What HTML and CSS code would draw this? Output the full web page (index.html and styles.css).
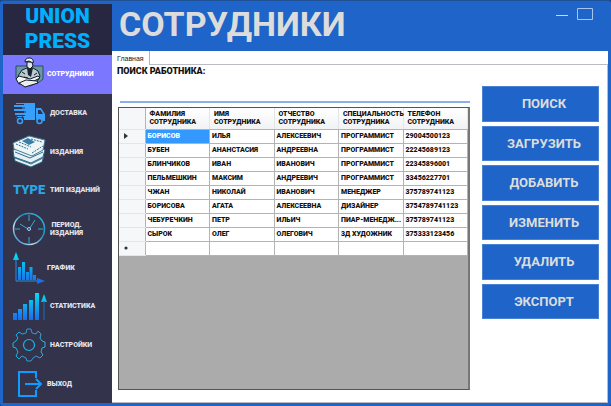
FILE: index.html
```html
<!DOCTYPE html>
<html lang="ru">
<head>
<meta charset="utf-8">
<title>Union Press — Сотрудники</title>
<link rel="stylesheet" href="styles.css">
</head>
<body>
<div class="window">
  <aside class="sidebar">
    <div class="logo">UNION<br>PRESS</div>
    <nav class="menu">
      <a class="item item-active" href="#staff">
        <svg class="icon" viewBox="0 0 32 32">
          <path d="M3 8H30V21C27 25 22 25 17 28C12 25 6 25 3 21Z" fill="#6b98a6" stroke="#2c4a62"/>
          <path d="M9 12L14 10L20 10L25 13L27 18L24 24L12 26L7 22L5 18Z" fill="#bccbd0" stroke="#111a29"/>
          <path d="M14 10L15 17L18 19L20 10Z" fill="#1a2533"/>
          <path d="M9 14L12 16M24 15L21 17M11 19L15 20" stroke="#111a29"/>
          <path d="M14 4H19L20 8L17 11L14 9Z" fill="#dfe6e6" stroke="#111a29"/>
          <path d="M12 4C12 1 14 0 16 0C19 0 21 2 20 5L16 3Z" fill="#f0f3f3" stroke="#111a29"/>
          <path d="M3 21L6 18L17 21L25 18L27 20L17 25L6 26Z" fill="#f4f5f2" stroke="#111a29"/>
          <path d="M6 25L13 22L24 23L25 25L12 29Z" fill="#eceeec" stroke="#111a29"/>
        </svg>
        <span>СОТРУДНИКИ</span>
      </a>
      <a class="item item-wide" href="#delivery">
        <svg class="icon" viewBox="0 0 32 32">
          <g fill="#36a0fa">
            <path d="M3 6H22V23H11A4 4 0 0 0 3 22V20H9V18H2V16H11V14H1V12H9V10H1V8H3Z"/>
            <path d="M23 11H28L32 17V24H30A4 4 0 0 0 23 23Z"/>
          </g>
          <path d="M1 7.500H11M1 11H12M3 15H13M1 18.500H12" stroke="#33334b"/>
          <path d="M25 13H27.500L30 17H25Z" fill="#33334b"/>
          <g fill="#33334b" stroke="#36a0fa" stroke-width="1.500"><circle cx="7" cy="24" r="2.500"/><circle cx="26.500" cy="24" r="2.500"/></g>
        </svg>
        <span>ДОСТАВКА</span>
      </a>
      <a class="item item-wide" href="#editions">
        <svg class="icon" viewBox="0 0 32 32">
          <path d="M1 20L20 15L31 20L29 26L18 31L2 25Z" fill="#e6f1f5" stroke="#286484"/>
          <path d="M0 14L20 9L32 14L30 21L18 27L1 21Z" fill="#e6f1f5" stroke="#286484"/>
          <path d="M0 7L16 0L32 4L30 14L19 20L1 13Z" fill="#edf5f7" stroke="#477c98"/>
          <path d="M9 5L15 2L22 6L16 9Z" fill="#377fa6"/>
          <path d="M3 8L15 13M6 6L18 11M18 3L29 6M19 17L30 10" fill="none" stroke="#2e6d8f" stroke-dasharray="2 1"/>
          <path d="M2 16L17 22L30 16M2 22L18 28L30 22" fill="none" stroke="#2e6d8f"/>
        </svg>
        <span>ИЗДАНИЯ</span>
      </a>
      <a class="item item-wide" href="#types">
        <span class="type-mark">TYPE</span>
        <span>ТИП ИЗДАНИЙ</span>
      </a>
      <a class="item item-wide" href="#period">
        <svg class="icon" viewBox="0 0 32 32">
          <defs><linearGradient id="clock" x1="0" y1="1" x2="1" y2="0"><stop offset="0" stop-color="#1268bd"/><stop offset=".3" stop-color="#b5e0f0"/><stop offset=".6" stop-color="#258fbd"/><stop offset="1" stop-color="#2cc4ed"/></linearGradient></defs>
          <circle cx="16" cy="16" r="15.500" fill="none" stroke="url(#clock)" stroke-width="1.500"/>
          <path d="M16 2V8M16 24V30M2 16H7M25 16H30M7 11L15 16M17 15L22 7" fill="none" stroke="#35acd9"/>
          <circle cx="16" cy="16" r="1.500" fill="none" stroke="#a5dcef"/>
        </svg>
        <span class="center">ПЕРИОД.<br>ИЗДАНИЯ</span>
      </a>
      <a class="item" href="#chart">
        <svg class="icon" viewBox="0 0 32 32">
          <defs><linearGradient id="bars" x1="0" y1="0" x2="0" y2="32" gradientUnits="userSpaceOnUse"><stop offset="0" stop-color="#00eaf2"/><stop offset="1" stop-color="#1e63e9"/></linearGradient></defs>
          <path d="M3 5V29H27" fill="none" stroke="#288ee6"/>
          <path d="M3 0L6 8H0ZM32 29L24 26V32ZM5 15H8V28H5ZM9 10H12V28H9ZM13 20H16V28H13ZM16.500 15H19.500V28H16.500ZM20 23H23V28H20Z" fill="url(#bars)"/>
        </svg>
        <span>ГРАФИК</span>
      </a>
      <a class="item item-wide" href="#stats">
        <svg class="icon" viewBox="0 0 32 32">
          <path d="M0 23H4V30H0ZM5 19H9V30H5ZM10 14H14V30H10ZM16 10H20V30H16ZM22 3H26V30H22ZM31 4L34 12H28Z" fill="url(#bars)"/>
          <path d="M31 11V30" stroke="#1b70b9"/>
        </svg>
        <span>СТАТИСТИКА</span>
      </a>
      <a class="item item-wide" href="#settings">
        <svg class="icon" viewBox="0 0 32 32">
          <defs><linearGradient id="gear"><stop offset="0" stop-color="#18b9e8"/><stop offset=".6" stop-color="#2d95d6"/><stop offset="1" stop-color="#23b9e7"/></linearGradient></defs>
          <path d="M14 0H18L19 4L23 5L25 2L28 5L27 9L29 12L32 13V18L29 19L28 23L30 26L27 29L23 27L20 29L18 32H14L13 29L9 27L6 30L3 27L5 23L3 19L0 18V14L3 12L5 9L3 6L6 3L9 5L13 4Z" fill="none" stroke="url(#gear)" stroke-linejoin="round"/>
          <circle cx="16" cy="16" r="5.500" fill="none" stroke="#16b5e8" stroke-width="1.200"/>
        </svg>
        <span>НАСТРОЙКИ</span>
      </a>
      <a class="item" href="#exit">
        <svg class="icon" viewBox="0 0 32 32">
          <path d="M23 10V4H6V28H23V22M12 16H27M23 11L28 16L23 21" fill="none" stroke="#109bff" stroke-width="2"/>
        </svg>
        <span>ВЫХОД</span>
      </a>
    </nav>
  </aside>
  <main class="main">
    <header class="header">
      <h1 class="title">СОТРУДНИКИ</h1>
      <div class="controls">
        <button class="control" type="button" aria-label="Свернуть"><svg width="12" height="12" viewBox="0 0 12 12"><path d="M0 7.500H12" stroke="#c9d9ef"/></svg></button>
        <button class="control" type="button" aria-label="Развернуть"><svg width="16" height="12" viewBox="0 0 16 12"><path d="M.5.500H15.500V11.500H.5Z" fill="none" stroke="#a9c5ec"/></svg></button>
      </div>
    </header>
    <div class="tabs"><button class="tab" type="button">Главная</button></div>
    <section class="panel">
      <div class="content">
        <label class="search-label" for="search">ПОИСК РАБОТНИКА:</label>
        <input class="search" id="search" type="text">
        <div class="grid">
          <table class="staff">
            <thead>
              <tr><th class="mark"></th><th>ФАМИЛИЯ<br>СОТРУДНИКА</th><th>ИМЯ<br>СОТРУДНИКА</th><th>ОТЧЕСТВО<br>СОТРУДНИКА</th><th>СПЕЦИАЛЬНОСТЬ<br>СОТРУДНИКА</th><th>ТЕЛЕФОН<br>СОТРУДНИКА</th></tr>
            </thead>
            <tbody>
              <tr><td class="mark"><svg class="pointer" viewBox="0 0 4 6"><path d="M0 0L4 3L0 6Z"/></svg></td><td class="selected">БОРИСОВ</td><td>ИЛЬЯ</td><td>АЛЕКСЕЕВИЧ</td><td>ПРОГРАММИСТ</td><td>29004500123</td></tr>
              <tr><td class="mark"></td><td>БУБЕН</td><td>АНАНСТАСИЯ</td><td>АНДРЕЕВНА</td><td>ПРОГРАММИСТ</td><td>22245689123</td></tr>
              <tr><td class="mark"></td><td>БЛИНЧИКОВ</td><td>ИВАН</td><td>ИВАНОВИЧ</td><td>ПРОГРАММИСТ</td><td>22345896001</td></tr>
              <tr><td class="mark"></td><td>ПЕЛЬМЕШКИН</td><td>МАКСИМ</td><td>АНДРЕЕВИЧ</td><td>ПРОГРАММИСТ</td><td>33456227701</td></tr>
              <tr><td class="mark"></td><td>ЧЖАН</td><td>НИКОЛАЙ</td><td>ИВАНОВИЧ</td><td>МЕНЕДЖЕР</td><td>375789741123</td></tr>
              <tr><td class="mark"></td><td>БОРИСОВА</td><td>АГАТА</td><td>АЛЕКСЕЕВНА</td><td>ДИЗАЙНЕР</td><td>3754789741123</td></tr>
              <tr><td class="mark"></td><td>ЧЕБУРЕЧКИН</td><td>ПЕТР</td><td>ИЛЬИЧ</td><td>ПИАР-МЕНЕДЖ...</td><td>375789741123</td></tr>
              <tr><td class="mark"></td><td>СЫРОК</td><td>ОЛЕГ</td><td>ОЛЕГОВИЧ</td><td>3Д ХУДОЖНИК</td><td>375333123456</td></tr>
              <tr><td class="mark"><svg class="pointer" viewBox="0 0 4 6"><circle cx="2" cy="3" r="1.600"/></svg></td><td></td><td></td><td></td><td></td><td></td></tr>
            </tbody>
          </table>
        </div>
      </div>
      <div class="actions">
        <button class="action" type="button">ПОИСК</button>
        <button class="action" type="button">ЗАГРУЗИТЬ</button>
        <button class="action" type="button">ДОБАВИТЬ</button>
        <button class="action" type="button">ИЗМЕНИТЬ</button>
        <button class="action" type="button">УДАЛИТЬ</button>
        <button class="action" type="button">ЭКСПОРТ</button>
      </div>
    </section>
  </main>
</div>
</body>
</html>
```
FILE: styles.css
```css
* { box-sizing: border-box; }

body {
  margin: 0;
  background: #123f83;
  font-family: Roboto, sans-serif;
  font-weight: 900;
}

button { font: inherit; border: 0; padding: 0; }

.window {
  display: grid;
  grid-template-columns: 109px minmax(0, 1fr);
  min-height: 100vh;
  padding: 3px;
  background: #1f64c8;
  border-top: 1px solid #205094;
  border-radius: 3px;
}

.sidebar {
  display: flex;
  flex-direction: column;
  background: #33334b;
}

.logo {
  height: 51px;
  background: #272742;
  color: #00b0ff;
  font-size: 21px;
  line-height: 25px;
  text-align: center;
}

.menu {
  flex: 1;
  display: grid;
  grid-auto-rows: 1fr;
}

.item {
  display: flex;
  align-items: center;
  gap: 2px;
  padding-left: 10px;
  color: #e4e4ea;
  font-size: 7px;
  line-height: 8px;
  text-decoration: none;
  white-space: nowrap;
}

.item-wide { gap: 5px; }
.item-active { background: #7b78ff; color: #fff; }
.center { text-align: center; }
.icon { width: 32px; height: 32px; flex: none; overflow: visible; }

.type-mark {
  width: 32px;
  color: #28a8e8;
  font-size: 13px;
}

.main {
  display: flex;
  flex-direction: column;
  min-width: 0;
  background: #fff;
}

.header {
  display: flex;
  justify-content: space-between;
  height: 47px;
  padding: 0 15px 0 7px;
  background: #1f64c8;
}

.title {
  margin: 0;
  color: #dcdcdc;
  font-size: 34px;
  font-weight: 700;
  line-height: 40px;
}

.controls { display: flex; align-items: flex-start; gap: 9px; padding-top: 4px; }
.control { background: none; line-height: 0; }

.tabs { display: flex; height: 13px; }

.tab {
  position: relative;
  height: 14px;
  padding: 0 5px;
  border-right: 1px solid #b0b4bd;
  background: #fff;
  color: #222;
  font-family: "Liberation Sans", sans-serif;
  font-weight: 400;
  font-size: 7px;
  line-height: 13px;
}

.panel {
  flex: 1;
  display: flex;
  gap: 12px;
  padding: 1px 8px 12px 5px;
  border: 1px solid #b9bcc5;
  border-left: 0;
}

.content { flex: 1; display: flex; flex-direction: column; min-width: 0; }
.search-label { color: #111; font-size: 9px; line-height: 11px; }

.search {
  height: 26px;
  margin: 0 0 4px 3px;
  padding: 0;
  border: 0;
  border-bottom: 2px solid #8bb2e6;
  font-size: 8px;
  outline: 0;
}

.grid {
  flex: 1;
  margin-left: 1px;
  border: 1px solid #555;
  border-right: 2px solid #777;
  background: #ababab;
}

.staff {
  width: 100%;
  height: 148px;
  table-layout: fixed;
  border-collapse: collapse;
  background: #fff;
  color: #111;
  font-size: 7px;
  line-height: 8px;
  text-align: left;
}

.staff th, .staff td {
  padding: 0 0 0 2px;
  border-right: 1px solid #b3b3b3;
  border-bottom: 1px solid #b3b3b3;
  white-space: nowrap;
}

.staff td { height: 14px; }

.staff th {
  height: 21px;
  padding-left: 4px;
  border-right-color: #e3e5e8;
  background: linear-gradient(#fff, #f1f2f4);
  font-weight: 900;
}

.staff .mark { width: 26px; padding-left: 5px; background: #f6f7f9; border-bottom-color: #e3e5e8; border-right-color: #b3b3b3; }
.staff .selected { background: #3399ff; color: #fff; }
.pointer { display: block; width: 4px; height: 6px; fill: #333; }

.actions {
  display: grid;
  grid-auto-rows: 1fr;
  gap: 4px;
  width: 117px;
  height: 233px;
  margin-top: 20px;
}

.action {
  padding-left: 7px;
  border: 1px solid #4a82d3;
  background: #1f64c8;
  color: #dcdcdc;
  font-weight: 700;
  font-size: 13px;
}
```
